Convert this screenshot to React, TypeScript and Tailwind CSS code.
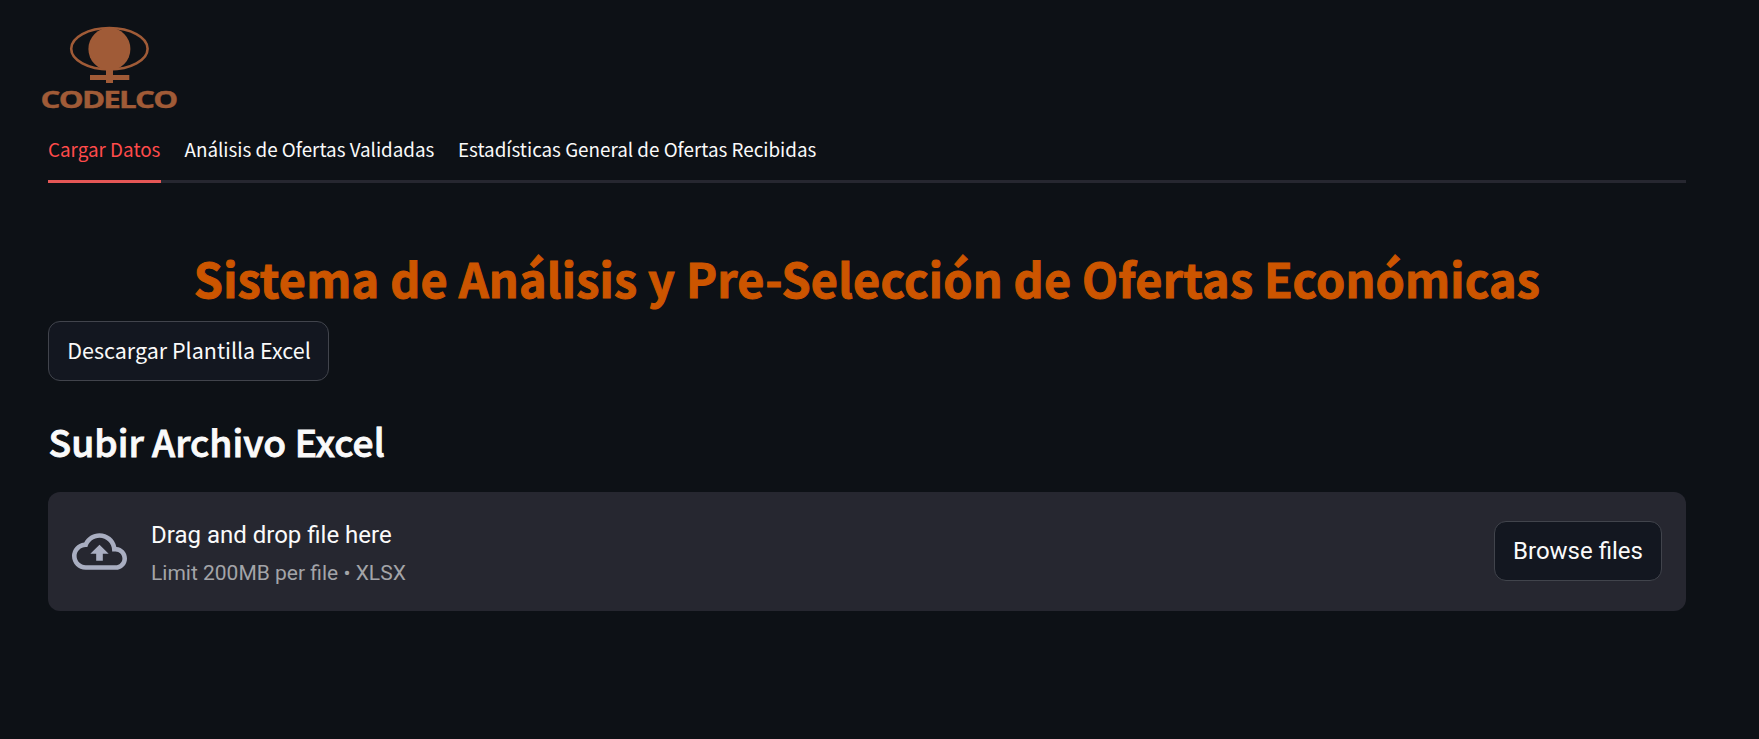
function Logo() {
  return (
    <svg width="146" height="95" viewBox="0 0 146 95" className="block overflow-visible" fill="#a05b37" aria-label="Codelco">
      <ellipse cx="72.4" cy="29.7" rx="38.2" ry="20.7" fill="none" stroke="#a05b37" strokeWidth="2.6" />
      <ellipse cx="72.4" cy="30" rx="21" ry="21.3" />
      <rect x="69" y="48" width="7" height="16" />
      <rect x="53" y="56" width="39.3" height="5" />
      <text
        x="3.6"
        y="88.6"
        fontFamily="Open Sans, sans-serif"
        fontWeight="700"
        fontSize="22.8"
        letterSpacing="-1.3"
        textLength="135.8"
        lengthAdjust="spacingAndGlyphs"
        stroke="#a05b37"
        strokeWidth="0.4"
      >
        CODELCO
      </text>
    </svg>
  );
}

function CloudUpload() {
  return (
    <svg width="55" height="55" viewBox="0 0 24 24" fill="#a9aec1" className="shrink-0">
      <path d="M19.35 10.04A7.49 7.49 0 0012 4C9.11 4 6.6 5.64 5.35 8.04A5.994 5.994 0 000 14c0 3.31 2.69 6 6 6h13c2.76 0 5-2.24 5-5 0-2.64-2.05-4.78-4.65-4.96zM19 18H6c-2.21 0-4-1.79-4-4s1.79-4 4-4h.71C7.37 7.69 9.48 6 12 6c3.04 0 5.5 2.46 5.5 5.5v.5H19c1.66 0 3 1.34 3 3s-1.34 3-3 3zM8 13h2.55v3h2.9v-3H16l-4-4z" />
    </svg>
  );
}

const tabs = ["Cargar Datos", "Análisis de Ofertas Validadas", "Estadísticas General de Ofertas Recibidas"];

export default function App() {
  return (
    <div className="min-h-screen bg-[#0d1116] pt-[19px] pr-[73px] pl-12 font-['Noto_Sans_CJK_SC',sans-serif] text-[#fafafa]">
      <div className="-ml-[11px] h-[95px]">
        <Logo />
      </div>

      <div role="tablist" className="flex h-[69px] gap-[23.5px] border-b-3 border-[#262730]">
        {tabs.map((label, i) => (
          <button
            key={label}
            role="tab"
            className={
              i === 0
                ? "-mb-[3px] flex h-[69px] w-[113px] items-center border-b-3 border-[#e45756] pt-[4px] text-[18.84px] whitespace-nowrap text-[#ff4b4b]"
                : "flex h-[66px] items-center pt-[4px] text-[18.82px] whitespace-nowrap"
            }
          >
            {label}
          </button>
        ))}
      </div>

      <h1 className="mt-[62px] h-[76px] text-center text-[46.8px] leading-[66px] font-bold tracking-[0.18px] whitespace-nowrap text-[#cc5500] [-webkit-text-stroke:1px_#cc5500]">
        Sistema de Análisis y Pre-Selección de Ofertas Económicas
      </h1>

      <button className="flex h-[60px] w-[281px] items-center justify-center rounded-xl border border-[#41444c] bg-[#131720] pb-[2px] pl-px text-[21.5px] whitespace-nowrap">
        Descargar Plantilla Excel
      </button>

      <h2 className="mt-[34px] h-[77px] pl-[0.5px] text-[37.2px] leading-[52px] font-medium tracking-[0.04px] whitespace-nowrap [-webkit-text-stroke:0.9px_#fafafa]">
        Subir Archivo Excel
      </h2>

      <section className="flex h-[119px] items-center rounded-xl bg-[#262730] px-6 font-[Roboto,sans-serif]">
        <CloudUpload />
        <div className="ml-6 flex flex-1 flex-col pt-[6px]">
          <span className="text-[24px] leading-[37px]">Drag and drop file here</span>
          <span className="text-[21px] leading-[39px] text-[#a3a4a8]">Limit 200MB per file • XLSX</span>
        </div>
        <button className="mb-[2px] flex h-[60px] w-[168px] items-center justify-center rounded-xl border border-[#41444c] bg-[#131720] text-[24px] whitespace-nowrap">
          Browse files
        </button>
      </section>
    </div>
  );
}
